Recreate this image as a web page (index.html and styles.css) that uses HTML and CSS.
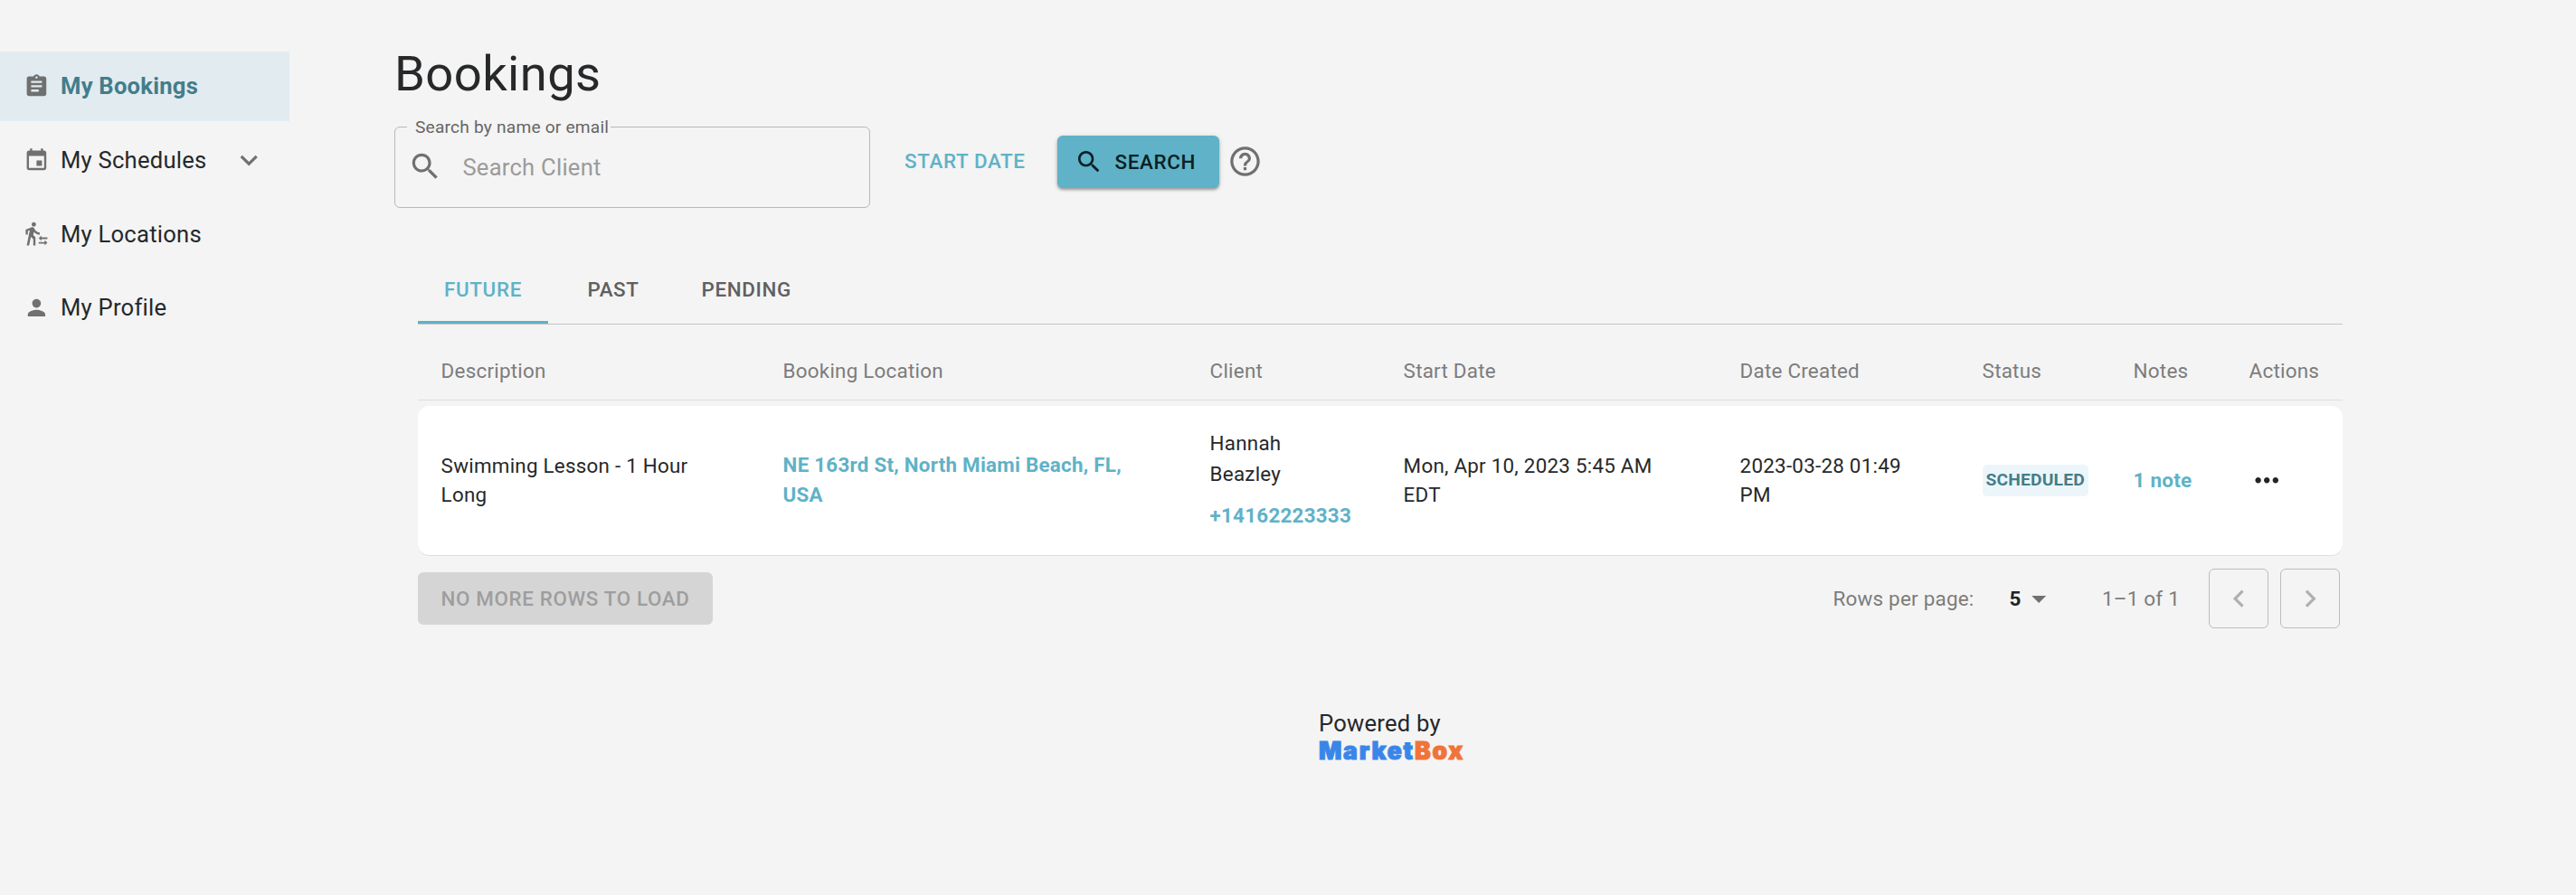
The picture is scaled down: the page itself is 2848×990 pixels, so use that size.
FILE: index.html
```
<!DOCTYPE html>
<html lang="en">
<head>
    <meta charset="UTF-8">
    <meta name="viewport" content="width=device-width, initial-scale=1.0">
    <title>Bookings</title>
    <link rel="stylesheet" href="styles.css">
</head>
<body>
    <div class="layout">
        <nav class="sidebar">
            <a class="nav-item active">
                <svg class="nav-icon" viewBox="0 0 24 24"><path d="M19 3h-4.18C14.4 1.84 13.3 1 12 1c-1.3 0-2.4.84-2.82 2H5c-1.1 0-2 .9-2 2v14c0 1.1.9 2 2 2h14c1.1 0 2-.9 2-2V5c0-1.1-.9-2-2-2zm-7 0c.55 0 1 .45 1 1s-.45 1-1 1-1-.45-1-1 .45-1 1-1zm2 14H7v-2h7v2zm3-4H7v-2h10v2zm0-4H7V7h10v2z"/></svg>
                <span>My Bookings</span>
            </a>
            <a class="nav-item">
                <svg class="nav-icon" viewBox="0 0 24 24"><path d="M17 12h-5v5h5v-5zM16 1v2H8V1H6v2H5c-1.11 0-1.99.9-1.99 2L3 19c0 1.1.89 2 2 2h14c1.1 0 2-.9 2-2V5c0-1.1-.9-2-2-2h-1V1h-2zm3 18H5V8h14v11z"/></svg>
                <span>My Schedules</span>
                <svg class="chevron" viewBox="0 0 24 24"><path d="M16.59 8.59L12 13.17 7.41 8.59 6 10l6 6 6-6z"/></svg>
            </a>
            <a class="nav-item">
                <svg class="nav-icon" viewBox="0 0 24 24"><path d="M9.5 5.5c1.1 0 2-.9 2-2s-.9-2-2-2-2 .9-2 2 .9 2 2 2zM5.75 8.9L3 23h2.1l1.75-8L9 17v6h2v-7.55L8.95 13.4l.6-3C10.85 12 12.8 13 15 13v-2c-1.85 0-3.45-1-4.35-2.45l-.95-1.6C9.35 6.35 8.7 6 8 6c-.25 0-.5.05-.75.15L2 8.3V13h2V9.65l1.75-.75M16.49 15.5v-1.75L14 16.25l2.49 2.5V17H22v-1.5zM19.51 19.75H14v1.5h5.51V23L22 20.5 19.51 18z"/></svg>
                <span>My Locations</span>
            </a>
            <a class="nav-item">
                <svg class="nav-icon" viewBox="0 0 24 24"><path d="M12 12c2.21 0 4-1.79 4-4s-1.79-4-4-4-4 1.79-4 4 1.79 4 4 4zm0 2c-2.67 0-8 1.34-8 4v2h16v-2c0-2.66-5.33-4-8-4z"/></svg>
                <span>My Profile</span>
            </a>
        </nav>

        <main class="content">
            <h1>Bookings</h1>
            <div class="filters">
                <fieldset class="search-field">
                    <legend>Search by name or email</legend>
                    <svg class="field-icon" viewBox="0 0 24 24"><path d="M15.5 14h-.79l-.28-.27C15.41 12.59 16 11.11 16 9.5 16 5.91 13.09 3 9.5 3S3 5.91 3 9.5 5.91 16 9.5 16c1.61 0 3.09-.59 4.23-1.57l.27.28v.79l5 4.99L20.49 19l-4.99-5zm-6 0C7.01 14 5 11.99 5 9.5S7.01 5 9.5 5 14 7.01 14 9.5 11.99 14 9.5 14z"/></svg>
                    <input type="text" placeholder="Search Client">
                </fieldset>
                <button class="btn-text">START DATE</button>
                <button class="btn-search">
                    <svg viewBox="0 0 24 24"><path d="M15.5 14h-.79l-.28-.27C15.41 12.59 16 11.11 16 9.5 16 5.91 13.09 3 9.5 3S3 5.91 3 9.5 5.91 16 9.5 16c1.61 0 3.09-.59 4.23-1.57l.27.28v.79l5 4.99L20.49 19l-4.99-5zm-6 0C7.01 14 5 11.99 5 9.5S7.01 5 9.5 5 14 7.01 14 9.5 11.99 14 9.5 14z"/></svg>
                    <span>SEARCH</span>
                </button>
                <svg class="help" viewBox="0 0 24 24"><path d="M11 18h2v-2h-2v2zm1-16C6.48 2 2 6.48 2 12s4.48 10 10 10 10-4.48 10-10S17.52 2 12 2zm0 18c-4.41 0-8-3.59-8-8s3.59-8 8-8 8 3.59 8 8-3.59 8-8 8zm0-14c-2.21 0-4 1.79-4 4h2c0-1.1.9-2 2-2s2 .9 2 2c0 2-3 1.75-3 5h2c0-2.25 3-2.5 3-5 0-2.21-1.79-4-4-4z"/></svg>
            </div>

            <section class="bookings">
                <div class="tabs">
                    <button class="tab selected">FUTURE</button>
                    <button class="tab">PAST</button>
                    <button class="tab">PENDING</button>
                </div>

                <table>
                    <thead>
                        <tr>
                            <th class="col-description">Description</th>
                            <th class="col-location">Booking Location</th>
                            <th class="col-client">Client</th>
                            <th class="col-start">Start Date</th>
                            <th class="col-created">Date Created</th>
                            <th class="col-status">Status</th>
                            <th class="col-notes">Notes</th>
                            <th class="col-actions">Actions</th>
                        </tr>
                    </thead>
                    <tbody>
                        <tr>
                            <td>Swimming Lesson - 1 Hour<br>Long</td>
                            <td><a class="link location">NE 163rd St, North Miami Beach, FL,<br>USA</a></td>
                            <td class="client">
                                <div class="client-name">Hannah<br>Beazley</div>
                                <a class="link">+14162223333</a>
                            </td>
                            <td>Mon, Apr 10, 2023 5:45 AM<br>EDT</td>
                            <td>2023-03-28 01:49<br>PM</td>
                            <td><span class="chip">SCHEDULED</span></td>
                            <td><a class="link">1 note</a></td>
                            <td><svg class="more" viewBox="0 0 24 24"><path d="M6 10c-1.1 0-2 .9-2 2s.9 2 2 2 2-.9 2-2-.9-2-2-2zm12 0c-1.1 0-2 .9-2 2s.9 2 2 2 2-.9 2-2-.9-2-2-2zm-6 0c-1.1 0-2 .9-2 2s.9 2 2 2 2-.9 2-2-.9-2-2-2z"/></svg></td>
                        </tr>
                    </tbody>
                </table>

                <div class="table-footer">
                    <button class="btn-disabled" disabled>NO MORE ROWS TO LOAD</button>
                    <div class="pagination">
                        <span class="rows-label">Rows per page:</span>
                        <span class="rows-value">5</span>
                        <svg class="arrow" viewBox="0 0 24 24"><path d="M7 10l5 5 5-5z"/></svg>
                        <span class="range">1–1 of 1</span>
                        <button class="page-btn"><svg viewBox="0 0 24 24"><path d="M15.41 7.41L14 6l-6 6 6 6 1.41-1.41L10.83 12z"/></svg></button>
                        <button class="page-btn"><svg viewBox="0 0 24 24"><path d="M10 6L8.59 7.41 13.17 12l-4.58 4.59L10 18l6-6z"/></svg></button>
                    </div>
                </div>
            </section>

            <footer class="powered">
                <div>Powered by</div>
                <div class="brand"><span class="market">Market</span><span class="box">Box</span></div>
            </footer>
        </main>
    </div>
</body>
</html>
```
FILE: styles.css
```
* {
    box-sizing: border-box;
}
body {
    margin: 0;
    font-family: Roboto, "Liberation Sans", sans-serif;
    font-size: 22.4px;
    letter-spacing: 0.01071em;
    color: #26282a;
    background-color: #f4f4f4;
}
button, input {
    font-family: inherit;
    border: none;
    background: none;
    padding: 0;
}
svg {
    display: block;
    flex-shrink: 0;
    fill: #707070;
}
.layout {
    display: flex;
    min-height: 990px;
}

/* sidebar */
.sidebar {
    width: 320px;
    padding-top: 57px;
    flex-shrink: 0;
}
.nav-item {
    display: flex;
    align-items: center;
    height: 77px;
    margin-bottom: 4.6px;
    padding-left: 25.6px;
    font-size: 25.6px;
    letter-spacing: 0.00938em;
}
.nav-item.active {
    padding-bottom: 1px;
    background-color: #e2ebf0;
    color: #437d8b;
    font-weight: 700;
}
.nav-icon {
    width: 28.8px;
    height: 28.8px;
    margin-right: 12.6px;
}
.chevron {
    width: 38.4px;
    height: 38.4px;
    margin-left: 28px;
}

/* search area */
.content {
    width: 2154px;
    margin-left: 116px;
}
h1 {
    margin: 48px 0 0;
    font-size: 54.4px;
    line-height: 67px;
    font-weight: 400;
    letter-spacing: 0.00735em;
}
.filters {
    display: flex;
    height: 102px;
    margin-top: 15px;
}
.search-field {
    display: flex;
    align-items: center;
    width: 526px;
    height: 100px;
    margin: 0;
    padding: 0 12px 11px 14px;
    border: 1px solid #b8b8b8;
    border-radius: 6px;
}
.search-field legend {
    margin-left: -1px;
    padding: 0 2px 0 9px;
    font-size: 19.2px;
    line-height: 21px;
    color: #666;
    letter-spacing: 0.00938em;
}
.field-icon {
    width: 38.4px;
    height: 38.4px;
    margin-right: 22px;
}
.search-field input {
    width: 400px;
    height: 40px;
    font-size: 25.6px;
    letter-spacing: 0.00938em;
}
.search-field input::placeholder {
    color: #9b9b9b;
    opacity: 1;
}
.btn-text, .btn-search, .tab, .btn-disabled {
    font-size: 22.4px;
    font-weight: 500;
    letter-spacing: 0.02857em;
}
.btn-text {
    height: 58px;
    margin: 19px 0 0 38px;
    color: #5fb2c7;
}
.btn-search {
    display: flex;
    align-items: center;
    width: 179px;
    height: 58px;
    margin: 20px 0 0 35px;
    padding-left: 19px;
    border-radius: 6px;
    background-color: #5fb2c7;
    color: #0b2024;
    box-shadow: 0 2px 3px rgba(0, 0, 0, 0.3), 0 1px 6px rgba(0, 0, 0, 0.12);
}
.btn-search svg {
    width: 32px;
    height: 32px;
    margin-right: 13px;
    fill: #0b2024;
}
.help {
    width: 39px;
    height: 39px;
    margin: 29px 0 0 9px;
}

/* bookings table */
.bookings {
    width: 2128px;
    margin: 50px 0 0 26px;
}
.tabs {
    display: flex;
    height: 77px;
    border-bottom: 1px solid #c4c4c4;
}
.tab {
    min-width: 144px;
    padding: 2px 25.6px 0;
    color: #606060;
    border-bottom: 3px solid transparent;
}
.tab.selected {
    color: #5fb2c7;
    border-bottom-color: #5fb2c7;
}
table {
    width: 100%;
    table-layout: fixed;
    border-collapse: separate;
    border-spacing: 0 6px;
}
th, td {
    padding: 0 0 0 25.6px;
    text-align: left;
    line-height: 32px;
    border-bottom: 1px solid #dedede;
}
th {
    height: 78px;
    padding-top: 13px;
    font-weight: 400;
    color: #7c7c7c;
}
td {
    height: 166px;
    padding-bottom: 1px;
    background-color: #fff;
}
td:first-child {
    border-radius: 13px 0 0 13px;
}
td:last-child {
    border-radius: 0 13px 13px 0;
}
.col-description { width: 378px; }
.col-location { width: 472px; }
.col-client { width: 214px; }
.col-start { width: 372px; }
.col-created { width: 268px; }
.col-status { width: 167px; }
.col-notes { width: 128px; }
.col-actions { width: 129px; }
.link {
    color: #5fb2c7;
    font-weight: 700;
}
.location {
    line-height: 33px;
}
.client {
    padding-bottom: 4px;
}
.client-name {
    line-height: 34px;
    margin-bottom: 13px;
}
.chip {
    display: block;
    width: 117px;
    height: 35px;
    padding-left: 4px;
    border-radius: 5px;
    background-color: #ecf6fa;
    color: #437d8b;
    font-size: 19.2px;
    font-weight: 700;
    letter-spacing: 0.01em;
    line-height: 33px;
}
.more {
    width: 38.4px;
    height: 38.4px;
    fill: #212325;
}
.table-footer {
    display: flex;
    justify-content: space-between;
    align-items: center;
    height: 66px;
    margin-top: 8px;
}
.btn-disabled {
    width: 326px;
    height: 58px;
    border-radius: 6px;
    background-color: #d5d5d5;
    color: #9e9e9e;
}
.pagination {
    display: flex;
    align-items: center;
    padding-right: 3px;
    color: #7c7c7c;
}
.rows-value {
    margin-left: 39px;
    color: #212325;
    font-weight: 700;
}
.arrow {
    width: 38.4px;
    height: 38.4px;
}
.range {
    margin: 0 32px 0 51px;
}
.page-btn {
    display: flex;
    align-items: center;
    justify-content: center;
    width: 66px;
    height: 66px;
    border: 1px solid #bdbdbd;
    border-radius: 6px;
}
.page-btn + .page-btn {
    margin-left: 13px;
}
.page-btn svg {
    width: 38.4px;
    height: 38.4px;
    fill: #b0b0b0;
}

.powered {
    margin: 90px 0 0 1022px;
    font-size: 25.6px;
    line-height: 30px;
}
.brand {
    font-family: Inter, sans-serif;
    font-size: 26.5px;
    font-weight: 900;
    letter-spacing: 0.067em;
}
.market {
    color: #3a86e8;
    -webkit-text-stroke: 1px #3a86e8;
}
.box {
    color: #f0743a;
    -webkit-text-stroke: 1px #f0743a;
}
```
